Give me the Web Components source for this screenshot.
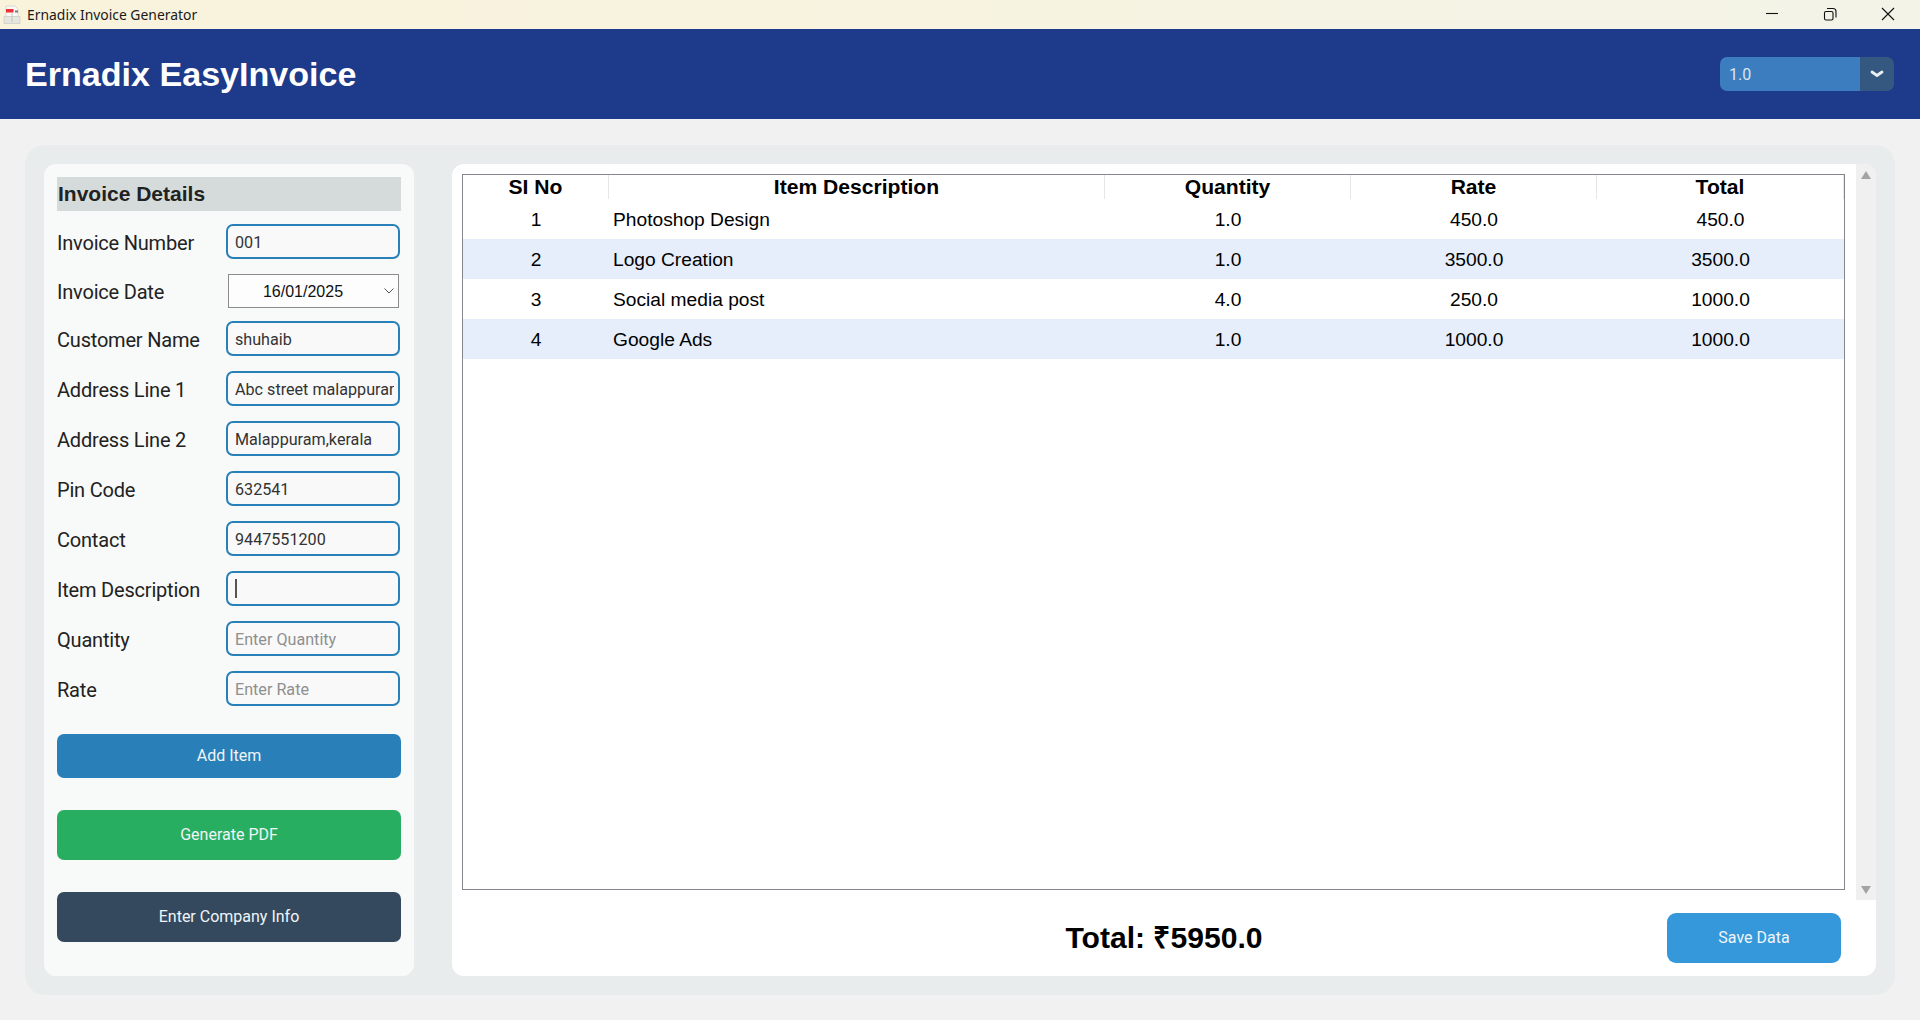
<!DOCTYPE html>
<html>
<head>
<meta charset="utf-8">
<title>Ernadix Invoice Generator</title>
<style>
  html, body { margin: 0; height: 100%; background: #f1f1f1; overflow: hidden; }
  body { display: flex; flex-direction: column; font-family: Roboto, "Liberation Sans", sans-serif; }
  invoice-form { width: 370px; flex: none; }
  invoice-table { flex: 1; }
</style>
</head>
<body>
<title-bar>Ernadix Invoice Generator</title-bar>
<app-header version="1.0">Ernadix EasyInvoice</app-header>
<main-panel>
  <invoice-form slot="left">
    <form-field label="Invoice Number" value="001"></form-field>
    <date-field label="Invoice Date" value="16/01/2025"></date-field>
    <form-field label="Customer Name" value="shuhaib"></form-field>
    <form-field label="Address Line 1" value="Abc street malappuram"></form-field>
    <form-field label="Address Line 2" value="Malappuram,kerala"></form-field>
    <form-field label="Pin Code" value="632541"></form-field>
    <form-field label="Contact" value="9447551200"></form-field>
    <form-field label="Item Description" focused></form-field>
    <form-field label="Quantity" placeholder="Enter Quantity"></form-field>
    <form-field label="Rate" placeholder="Enter Rate"></form-field>
    <div slot="actions" style="display:flex;flex-direction:column">
      <action-button color="#2980b9" style="height:44px;margin-top:28px">Add Item</action-button>
      <action-button color="#27ae60" style="height:50px;margin-top:32px">Generate PDF</action-button>
      <action-button color="#34495e" style="height:50px;margin-top:32px">Enter Company Info</action-button>
    </div>
  </invoice-form>
  <invoice-table slot="right" total="₹5950.0"></invoice-table>
</main-panel>

<script>
class TitleBar extends HTMLElement {
  connectedCallback(){
    this.attachShadow({mode: 'open'}).innerHTML = `
      <style>
        :host{ display:flex; align-items:center; height:29px; flex:none; padding-left:3px;
          background:linear-gradient(90deg,#f9f3dc 0%,#f8f3df 40%,#f3f3e8 100%); }
        .name{ font:13.900px "Noto Sans","Open Sans",sans-serif; color:#1a1a1a; margin-left:6px; }
        .controls{ margin-left:auto; display:flex; padding-right:3px; }
        .controls svg{ width:58px; height:29px; display:block; }
      </style>
      <svg width="18" height="20" viewBox="0 0 18 20">
        <path d="M3 1h9l3 3v8H3z" fill="#f8f8f4" stroke="#c9c9c4" stroke-width=".6"/>
        <rect x="3" y="4" width="7.500" height="3.500" fill="#e8323c"/>
        <rect x="12" y="5.500" width="3" height="2" fill="#777"/>
        <path d="M1 11.500h16v7H1z" fill="#e6e6e0" stroke="#c4c4bd" stroke-width=".6"/>
        <path d="M9 8v9" stroke="#b5b5ae" stroke-width=".7"/>
      </svg>
      <span class="name"><slot></slot></span>
      <div class="controls">
        <svg viewBox="0 0 58 29"><path d="M23 13.500h12" stroke="#111" stroke-width="1.100"/></svg>
        <svg viewBox="0 0 58 29" fill="none" stroke="#111" stroke-width="1.100"><rect x="23.500" y="11.500" width="8.500" height="8.500" rx="1.500"/><path d="M26 8.500h6a3 3 0 0 1 3 3v6"/></svg>
        <svg viewBox="0 0 58 29" fill="none" stroke="#111" stroke-width="1.100"><path d="M23 8l12 12M35 8L23 20"/></svg>
      </div>`;
  }
}

class AppHeader extends HTMLElement {
  connectedCallback(){
    this.attachShadow({mode: 'open'}).innerHTML = `
      <style>
        :host{ display:flex; align-items:center; justify-content:space-between; height:90px; flex:none;
          background:#1e3a8a; padding:0 26px 0 25px; }
        h1{ margin:0; color:#fff; font:bold 34.100px "Liberation Sans",Arial,sans-serif; }
        .select{ display:flex; width:174px; height:34px; border-radius:7px; overflow:hidden; color:#dce4ee; font:16px Roboto,sans-serif; }
        .value{ flex:1; background:#3b7dbf; padding-left:9px; line-height:35px; }
        .arrow{ width:34px; background:#34587f; display:flex; align-items:center; justify-content:center; }
      </style>
      <h1><slot></slot></h1>
      <div class="select">
        <div class="value">${this.getAttribute('version')}</div>
        <div class="arrow"><svg width="14" height="8" viewBox="0 0 14 8"><path d="M2 2L7 5.500 12 2" fill="none" stroke="#e8eef4" stroke-width="2.800" stroke-linecap="round"/></svg></div>
      </div>`;
  }
}

class MainPanel extends HTMLElement {
  connectedCallback(){
    this.attachShadow({mode: 'open'}).innerHTML = `
      <style>
        :host{ display:flex; flex:none; height:850px; margin:26px 25px 0; padding:19px 19px 19px 19px;
          box-sizing:border-box; background:#e9eced; border-radius:20px; gap:38px; }
      </style>
      <slot name="left"></slot>
      <slot name="right"></slot>`;
  }
}

class InvoiceForm extends HTMLElement {
  connectedCallback(){
    this.attachShadow({mode: 'open'}).innerHTML = `
      <style>
        :host{ display:block; box-sizing:border-box; background:#f8f9f9; border-radius:12px; padding:13px; }
        h2{ margin:0 0 13px; height:34px; background:#d5dbdb; color:#222; padding-left:1px;
          font:bold 21px/34px "Liberation Sans",Arial,sans-serif; }
        .fields{ display:flex; flex-direction:column; gap:15px; }
      </style>
      <h2>Invoice Details</h2>
      <div class="fields"><slot></slot></div>
      <slot name="actions"></slot>`;
  }
}

const fieldStyles = `
  :host{ display:flex; align-items:center; height:35px; }
  label{ width:169px; flex:none; color:#222; font-size:20px; letter-spacing:-.2px; padding-top:2px; }
`;

class FormField extends HTMLElement {
  connectedCallback(){
    const value = this.getAttribute('value');
    const placeholder = this.getAttribute('placeholder');
    let inner = '';
    if (value) inner = value;
    else if (placeholder) inner = `<span class="ph">${placeholder}</span>`;
    else if (this.hasAttribute('focused')) inner = '<span class="caret"></span>';
    this.attachShadow({mode: 'open'}).innerHTML = `
      <style>
        ${fieldStyles}
        .box{ width:174px; height:35px; box-sizing:border-box; border:2px solid #2980b9; border-radius:7px;
          background:#f9f9fa; padding:0 4px 0 7px; font-size:16.150px; line-height:30px; color:#333;
          white-space:nowrap; overflow:hidden; display:flex; align-items:center; }
        .text{ overflow:hidden; padding-top:3px; }
        .ph{ color:#8f8f8f; }
        .caret{ display:block; width:1.500px; height:19px; background:#555; margin-bottom:3px; }
      </style>
      <label>${this.getAttribute('label')}</label>
      <div class="box"><div class="text">${inner}</div></div>`;
  }
}

class DateField extends HTMLElement {
  connectedCallback(){
    this.attachShadow({mode: 'open'}).innerHTML = `
      <style>
        ${fieldStyles}
        :host{ height:34px; margin-bottom:-2px; }
        .box{ margin-left:2px; width:171px; height:34px; box-sizing:border-box; border:1px solid #8c8c8c;
          background:#fdfdfd; display:flex; align-items:center; color:#111; font:16px "Liberation Sans",Arial,sans-serif; }
        .text{ flex:1; text-align:center; padding:2px 7px 0 0; }
        svg{ margin-right:4px; }
      </style>
      <label>${this.getAttribute('label')}</label>
      <div class="box"><div class="text">${this.getAttribute('value')}</div>
        <svg width="10" height="6" viewBox="0 0 10 6"><path d="M.5.500L5 5 9.500.500" fill="none" stroke="#555"/></svg>
      </div>`;
  }
}

class ActionButton extends HTMLElement {
  connectedCallback(){
    this.attachShadow({mode: 'open'}).innerHTML = `
      <style>
        :host{ display:flex; align-items:center; justify-content:center; background:${this.getAttribute('color')};
          border-radius:7px; color:#f0f5f8; font-size:16px; box-sizing:border-box; padding-bottom:2px; }
      </style>
      <slot></slot>`;
  }
}

const ROWS = [
  ['1', 'Photoshop Design', '1.0', '450.0', '450.0'],
  ['2', 'Logo Creation', '1.0', '3500.0', '3500.0'],
  ['3', 'Social media post', '4.0', '250.0', '1000.0'],
  ['4', 'Google Ads', '1.0', '1000.0', '1000.0']
];

class InvoiceTable extends HTMLElement {
  connectedCallback(){
    const heads = ['SI No', 'Item Description', 'Quantity', 'Rate', 'Total'];
    this.attachShadow({mode: 'open'}).innerHTML = `
      <style>
        :host{ display:flex; flex-direction:column; background:#fff; border-radius:12px;
          font-family:"Liberation Sans",Arial,sans-serif; color:#000; overflow:hidden; }
        .top{ display:flex; height:736px; flex:none; }
        .tree-wrap{ flex:1; padding:10px 11px 10px 10px; }
        .tree{ height:100%; box-sizing:border-box; border:1px solid #85858d; }
        .row{ display:grid; grid-template-columns:146px 496px 246px 246px 1fr; height:40px; align-items:center; font-size:19.200px; }
        .row > div{ text-align:center; padding-top:2px; }
        .row > div:nth-child(2){ text-align:left; padding-left:4px; }
        .row:nth-child(even){ background:#e6eefb; }
        .head{ display:grid; grid-template-columns:146px 496px 246px 246px 1fr; height:24px; font:bold 21.100px/24px "Liberation Sans",Arial,sans-serif; text-align:center; }
        .head div{ border-right:1px solid #e6e6e6; }
        .scroll{ width:20px; background:#f0f0f0; display:flex; flex-direction:column; align-items:center; justify-content:space-between; padding:7px 0 6px; box-sizing:border-box; }
        .up{ border:5px solid transparent; border-top:0; border-bottom:8px solid #a3a3a3; }
        .down{ border:5px solid transparent; border-bottom:0; border-top:8px solid #a3a3a3; }
        .bottom{ flex:1; display:flex; align-items:center; padding-right:35px; }
        .total{ flex:1; font:bold 30.100px "Liberation Sans",Arial,sans-serif; text-align:center; padding-left:209px; padding-bottom:3px; }
        .save{ width:174px; height:50px; background:#3498db; border-radius:9px; color:#f0f6fb; padding-bottom:2px; box-sizing:border-box;
          font:16px Roboto,sans-serif; display:flex; align-items:center; justify-content:center; flex:none; }
      </style>
      <div class="top">
        <div class="tree-wrap">
          <div class="tree">
            <div class="head">${heads.map(h => `<div>${h}</div>`).join('')}</div>
            <div class="rows">
              ${ROWS.map(r => `<div class="row">${r.map(c => `<div>${c}</div>`).join('')}</div>`).join('')}
            </div>
          </div>
        </div>
        <div class="scroll"><div class="up"></div><div class="down"></div></div>
      </div>
      <div class="bottom">
        <div class="total">Total: ${this.getAttribute('total')}</div>
        <div class="save">Save Data</div>
      </div>`;
  }
}

customElements.define('title-bar', TitleBar);
customElements.define('app-header', AppHeader);
customElements.define('main-panel', MainPanel);
customElements.define('invoice-form', InvoiceForm);
customElements.define('form-field', FormField);
customElements.define('date-field', DateField);
customElements.define('action-button', ActionButton);
customElements.define('invoice-table', InvoiceTable);
</script>
</body>
</html>
